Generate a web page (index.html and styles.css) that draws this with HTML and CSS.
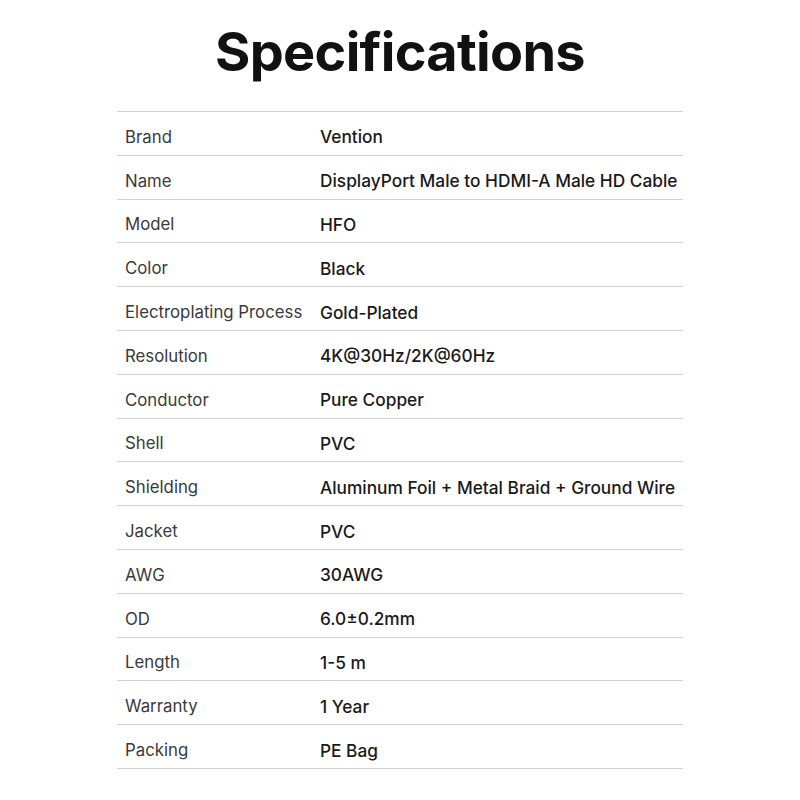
FILE: index.html
```html
<!DOCTYPE html>
<html>
<head>
<meta charset="utf-8">
<link rel="stylesheet" href="styles.css">
</head>
<body>
<div class="page">
  <h1 class="title">Specifications</h1>
  <div class="table">
    <div class="row"><div class="label">Brand</div><div class="value">Vention</div></div>
    <div class="row"><div class="label">Name</div><div class="value">DisplayPort Male to HDMI-A Male HD Cable</div></div>
    <div class="row"><div class="label">Model</div><div class="value">HFO</div></div>
    <div class="row"><div class="label">Color</div><div class="value">Black</div></div>
    <div class="row"><div class="label">Electroplating Process</div><div class="value">Gold-Plated</div></div>
    <div class="row"><div class="label">Resolution</div><div class="value">4K@30Hz/2K@60Hz</div></div>
    <div class="row"><div class="label">Conductor</div><div class="value">Pure Copper</div></div>
    <div class="row"><div class="label">Shell</div><div class="value">PVC</div></div>
    <div class="row"><div class="label">Shielding</div><div class="value">Aluminum Foil + Metal Braid + Ground Wire</div></div>
    <div class="row"><div class="label">Jacket</div><div class="value">PVC</div></div>
    <div class="row"><div class="label">AWG</div><div class="value">30AWG</div></div>
    <div class="row"><div class="label">OD</div><div class="value">6.0±0.2mm</div></div>
    <div class="row"><div class="label">Length</div><div class="value">1-5 m</div></div>
    <div class="row"><div class="label">Warranty</div><div class="value">1 Year</div></div>
    <div class="row"><div class="label">Packing</div><div class="value">PE Bag</div></div>
  </div>
</div>
</body>
</html>
```
FILE: styles.css
```css
html, body {
  margin: 0;
  padding: 0;
  background: #ffffff;
}
.page {
  width: 800px;
  height: 800px;
  display: flex;
  flex-direction: column;
  align-items: center;
  font-family: "Inter", "Noto Sans", sans-serif;
}
.title {
  margin: 0;
  height: 111px;
  font-size: 54px;
  font-weight: 700;
  color: #111111;
  line-height: 104px;
  letter-spacing: -0.7px;
}
.table {
  width: 566px;
  border-top: 1px solid #d2d2d2;
}
.row {
  display: flex;
  align-items: center;
  box-sizing: border-box;
  height: 43.8px;
  padding-top: 7px;
  border-bottom: 1px solid #d2d2d2;
}
.label {
  width: 195px;
  padding-left: 8px;
  color: #3a3a3a;
  font-weight: 400;
  font-size: 16.8px;
}
.value {
  color: #1a1a1a;
  font-weight: 500;
  font-size: 17.3px;
}
```
